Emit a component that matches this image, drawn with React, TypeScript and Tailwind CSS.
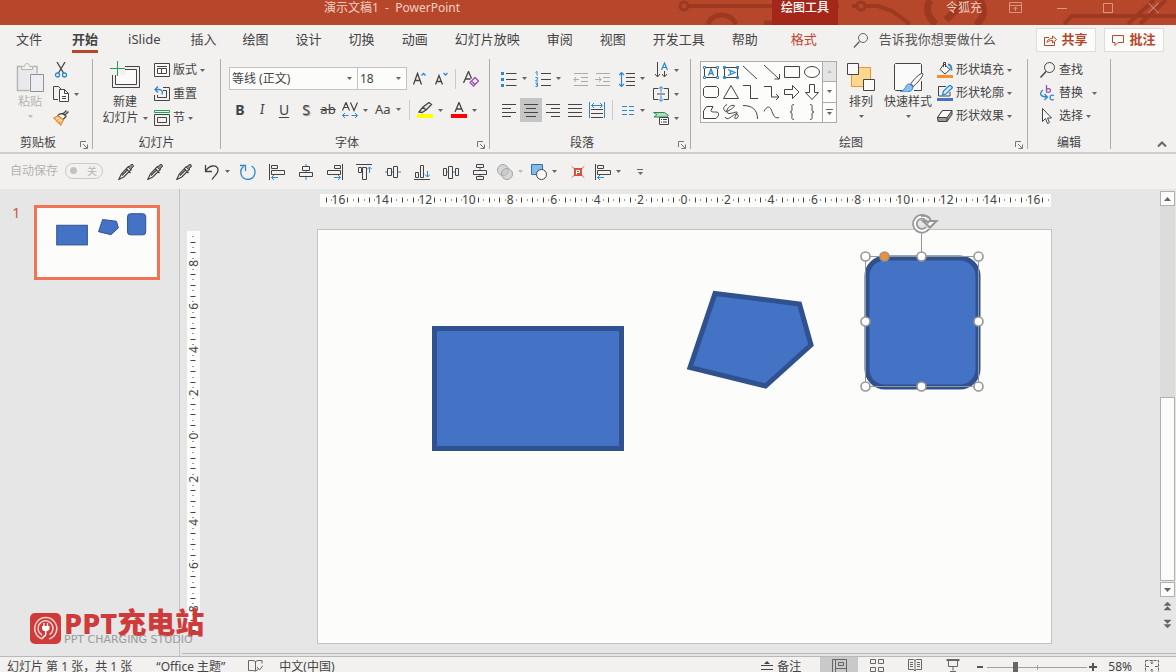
import React from 'react';

type IconProps = {
  w?: number;
  h?: number;
  children: React.ReactNode;
};

const Icon: React.FC<IconProps> = ({ w = 16, h = 16, children }) => (
  <svg
    width={w}
    height={h}
    viewBox={`0 0 ${w} ${h}`}
    fill="none"
    stroke="#444444"
    className="shrink-0"
    aria-hidden="true"
  >
    {children}
  </svg>
);

const Caret: React.FC<{ dim?: boolean }> = ({ dim }) => (
  <svg width="5" height="3" viewBox="0 0 5 3" className="shrink-0" aria-hidden="true">
    <path d="M0 0h5L2.500 3z" fill={dim ? '#bdbdbd' : '#666666'} />
  </svg>
);

const BLUE = '#2b88d0';

/* ---------- icons ---------- */

const PasteIcon = () => (
  <Icon w={28} h={32}>
    <path d="M3 6h16v6h-6v15H3z" fill="#e9e9ec" stroke="none" />
    <path d="M6.500 4.500h-5v24h12M17 4.500h4v7" stroke="#b5b5b5" strokeWidth="1.500" />
    <path d="M5.500 7.500v-3h3c0-4 5-4 5 0h3v3z" stroke="#b5b5b5" fill="#f1f1f1" />
    <path d="M14.500 12.500h13v17h-13z" stroke="#929292" fill="#ededf4" />
  </Icon>
);

const CutIcon = () => (
  <Icon>
    <path d="M4 0l6.500 11M12 0L5.500 11" strokeWidth="1.300" />
    <circle cx="4.500" cy="13" r="2" stroke={BLUE} strokeWidth="1.300" />
    <circle cx="11.500" cy="13" r="2" stroke={BLUE} strokeWidth="1.300" />
  </Icon>
);

const CopyIcon = () => (
  <Icon>
    <path d="M5 13.500H.5V.5h5l3 3" />
    <path d="M6.500 3.500h5l4 4v8h-9zM11.500 3.500v4h4M9 10.500h4M9 12.500h4" fill="#fafafa" />
  </Icon>
);

const PainterIcon = () => (
  <Icon>
    <path d="M15.500 1.500l-4 4M13.500.5l-4 4M10 3.500l3 3-3.500 3.500L5 5.500l1.500-1.500z" fill="#fafafa" strokeWidth="1.300" />
    <path d="M5 6L.8 8l7 7 2.500-5z" fill="#fbd9a8" stroke="#ee8a2c" strokeWidth="1.300" />
    <path d="M3.500 10.500l2-1M6 13l1.500-2" stroke="#ee8a2c" />
  </Icon>
);

const NewSlideIcon = () => (
  <Icon w={30} h={28}>
    <path d="M16 9h10v14H6V14h10z" fill="#fafafa" stroke="none" />
    <path d="M15 5.500h14.500v21h-27V14M15 8.500h11.500v15h-21V14" />
    <path d="M7.500 0v15M0 7.500h15" stroke="#21a05a" />
  </Icon>
);

const LayoutIcon = () => (
  <Icon>
    <path d="M.5 1.500h15v13H.5z" fill="#fafafa" />
    <path d="M3 4.500h10M3.500 6.500h4v5h-4zM7.500 6.500h5v5h-5z" />
  </Icon>
);

const ResetIcon = () => (
  <Icon>
    <path d="M9 1.500h6.500v13H.5V9" />
    <path d="M9 4.500h3.500v7h-9V9" />
    <path d="M1 3.500h4c3 0 4 2 3 5M4 .5l-3 3 3 3" stroke={BLUE} strokeWidth="1.300" />
  </Icon>
);

const SectionIcon = () => (
  <Icon>
    <path d="M.5.5h15v2H.5z" stroke="#21a05a" />
    <path d="M.5 4.500h15v11H.5zM3.500 7.500h9v5h-9z" />
  </Icon>
);

const ClearFormatIcon = () => (
  <Icon>
    <path d="M.5 12L5.500.5l3 7M2.500 8h5" strokeWidth="1.300" />
    <path
      d="M12 6.500l3.500 3.500-5 5L7 11.500zM8.500 10l3.500 3.500"
      stroke="#9a4fa8"
      strokeWidth="1.300"
      fill="#f4e6f6"
    />
  </Icon>
);

const GrowFont: React.FC<{ shrink?: boolean }> = ({ shrink }) => (
  <Icon w={14}>
    <path
      d={shrink ? 'M.5 13.500l3.500-9 3.500 9M2 10.500h4' : 'M.5 13.500l4-11 4 11M2 9.500h5'}
      strokeWidth="1.300"
    />
    <path d={shrink ? 'M8.500 2l2 2 2-2' : 'M8.500 4.500l2-2 2 2'} stroke={BLUE} strokeWidth="1.300" />
  </Icon>
);

const SpacingIcon = () => (
  <Icon>
    <path d="M.5 8.500l3.500-8 3.500 8M2 5.500h4M8.500.5l3.500 8 3.500-8" strokeWidth="1.200" />
    <path d="M.5 13.500h6M9.500 13.500h6M3 11L.5 13.500 3 16M13 11l2.500 2.500L13 16" stroke={BLUE} />
  </Icon>
);

const HighlightIcon = () => (
  <Icon>
    <path d="M2 10l4-5 6-4.500 2.500 2L9 8l-4 2.500zM6 5l3 3" fill="#e8e8e8" strokeWidth="1.300" />
    <path d="M0 12h16v4H0z" fill="#ffff00" stroke="none" />
  </Icon>
);

const FontColorIcon = () => (
  <Icon>
    <path d="M4 10L8 .5l4 9.500M5.500 7h5" strokeWidth="1.300" />
    <path d="M0 12h16v4H0z" fill="#ff0000" stroke="none" />
  </Icon>
);

const BulletsIcon = () => (
  <Icon>
    <path d="M5 2.500h10.500M5 8.500h10.500M5 14.500h10.500" />
    <path d="M0 1h3v3H0zM0 7h3v3H0zM0 13h3v3H0z" fill={BLUE} stroke="none" />
  </Icon>
);

const NumberingIcon = () => (
  <Icon>
    <path d="M6 2.500h10M6 8.500h10M6 14.500h10" />
    <path
      d="M.5 1.500L2 .5v4M.5 6.500h2v1.500L.5 10h2.500M.5 12h2v3.500h-2M1 13.500h1.500"
      stroke={BLUE}
    />
  </Icon>
);

const IndentIcon: React.FC<{ out?: boolean }> = ({ out }) => (
  <Icon>
    <path d="M1 2.500h14M8 6.500h7M8 10.500h7M1 14.500h14" stroke="#aaaaaa" />
    <path d={out ? 'M1 8.500h5M3 6L1 8.500 3 11' : 'M0 8.500h6M4 6l2 2.500L4 11'} stroke="#aaaaaa" />
  </Icon>
);

const LineSpacingIcon = () => (
  <Icon>
    <path d="M7 2.500h9M7 6.500h9M7 10.500h9M7 14.500h9" />
    <path
      d="M2.500 1.500v14M0 4l2.500-2.500L5 4M0 13l2.500 2.500L5 13M2.500 8v1"
      stroke={BLUE}
      strokeWidth="1.200"
    />
  </Icon>
);

const alignPaths = {
  left: 'M1 2.500h14M1 6.500h9M1 10.500h14M1 14.500h9',
  center: 'M1 2.500h14M3 6.500h10M1 10.500h14M3 14.500h10',
  right: 'M1 2.500h14M6 6.500h9M1 10.500h14M6 14.500h9',
  justify: 'M1 2.500h14M1 6.500h14M1 10.500h14M1 14.500h14',
};

const AlignIcon: React.FC<{ kind: keyof typeof alignPaths }> = ({ kind }) => (
  <Icon>
    <path d={alignPaths[kind]} />
  </Icon>
);

const DistributeTextIcon = () => (
  <Icon>
    <path d="M2 7.500h12M2 11.500h12M2 15.500h12" />
    <path d="M.5 0v16M15.500 0v16M3 3.500h10M5 1L2.500 3.500 5 6M11 1l2.500 2.500L11 6" stroke={BLUE} />
  </Icon>
);

const ColumnsIcon = () => (
  <Icon w={14}>
    <path d="M1 4.500h5M1 8.500h5M1 12.500h5M8 4.500h5M8 8.500h5M8 12.500h5" stroke={BLUE} />
  </Icon>
);

const TextDirectionIcon = () => (
  <Icon>
    <path d="M4.500 0v14M2 12l2.500 3L7 12M11.500 9v5M9 12l2.500 3 2.500-3" />
    <path d="M8.500 8l3-7 3 7M9.500 5.500h4" stroke={BLUE} strokeWidth="1.200" />
  </Icon>
);

const AlignTextIcon = () => (
  <Icon>
    <path d="M5 2.500H.5v11H5M11 2.500h4.500v11H11M4 8h8" />
    <path d="M8 1v5.500M8 9.500V15M5.500 3L8 .5 10.500 3M5.500 13L8 15.500l2.500-2.500" stroke={BLUE} />
  </Icon>
);

const SmartArtIcon = () => (
  <Icon>
    <path d="M.5 2.500h11l4 3-2 1.500H1l3-2.500z" fill="#b5d9c4" stroke="#21914f" />
    <path d="M6.500 7.500h9v7h-9zM8 9.500h1M10 9.500h4M8 12h1M10 12h4" fill="#fafafa" />
  </Icon>
);

const ArrangeIcon = () => (
  <Icon w={28} h={30}>
    <path d="M4.500 5.500h19v19h-19z" fill="#fcd88f" stroke="#f09230" />
    <path d="M.5 1.500h11v11H.5zM16.500 17.500h11v11h-11z" fill="#fafafa" />
  </Icon>
);

const QuickStyleIcon = () => (
  <Icon w={32} h={30}>
    <path d="M3 2h26v26H3z" fill="#fafafa" stroke="none" />
    <path d="M12 28.500H3.500L2.500 27.500V2.500l1-1h25l1 1V12M29.500 19v9.500H22" />
    <path d="M30.500 11.500c2 1-5 10-9.500 13l-2-3C22 17 28 11 30.500 11.500z" fill="#fafafa" />
    <path d="M18 22c-4-.5-4 3-5.500 5-1 1.200-3 2-4 2.500C14 31 21 30 21 25z" fill="#8cc0ea" stroke={BLUE} />
  </Icon>
);

const FillIcon = () => (
  <Icon>
    <path d="M7 2l6 5.500-5 4.500-5-4.500zM6.500 5V.5h2V5" fill="#fafafa" />
    <path d="M11 2.500c3 0 3.500 3 3.500 6" stroke={BLUE} strokeWidth="2" />
    <path d="M0 13h16v3H0z" fill="#f28f2e" stroke="none" />
  </Icon>
);

const OutlineIcon = () => (
  <Icon>
    <path d="M9 1.500H1.500v9.500H13V7" />
    <path d="M5.500 10l1-4 6.500-6 2.500 2.500L9 9z" fill="#d5e9f8" stroke={BLUE} strokeWidth="1.300" />
    <path d="M0 13h16v3H0z" fill="#4472c4" stroke="none" />
  </Icon>
);

const EffectsIcon = () => (
  <Icon>
    <path d="M5.500 2.500h9.500v4l-5 7H1L.5 9.500z" fill="#9a9a9a" />
    <path d="M5.500 2.500h9.500l-5 7H.5z" fill="#fafafa" />
    <path d="M10 9.500v4" />
  </Icon>
);

const FindIcon = () => (
  <Icon>
    <circle cx="9.500" cy="5.500" r="5" />
    <path d="M6 9.500L.5 15.500" strokeWidth="1.500" />
  </Icon>
);

const ReplaceIcon = () => (
  <Icon>
    <path d="M6.500 0v7.500M6.500 4.500c1-1.500 4-1 4 1s-3 2.500-4 1" stroke="#9a4fa8" strokeWidth="1.300" />
    <path
      d="M14 10.500c-2-1-4 0-4 2s2 3 4 2M3 5C-1 8 0 12 7 12M4.500 9L7.500 12l-3 3"
      stroke={BLUE}
      strokeWidth="1.300"
    />
  </Icon>
);

const SelectIcon = () => (
  <Icon>
    <path d="M2.500.5v13l3-3 2 5 2-1-2-4.500h4z" fill="#fafafa" />
  </Icon>
);

const PickerIcon = () => (
  <Icon>
    <path
      d="M.8 15.500l2.500-5.500 7-7.500 3 3-7.500 7.500zM8 4.500l4.500 4.500M4 11.500l6-6"
      strokeWidth="1.200"
    />
    <path d="M10.500 3.500l2.500-3c1.500-.8 3 .8 2.300 2.300l-3 2.700z" fill="#8a8a8a" />
  </Icon>
);

const UndoIcon = () => (
  <Icon>
    <path d="M1.500 1v6.500H8M1.500 7.500C5 .5 13 .5 14 5.500c.5 4-4 6.500-6 10" strokeWidth="1.300" />
  </Icon>
);

const RedoIcon = () => (
  <Icon>
    <path
      d="M3.500 2.500C-1 6 0 15 8 15.500 16 15 17 5 11.500 2M0 1.500h5.500V7"
      stroke={BLUE}
      strokeWidth="1.300"
    />
  </Icon>
);

const AlignLeftShapes = () => (
  <Icon>
    <path d="M.5 0v16M2.500 1.500h6v3h-6zM2.500 6.500h13v4h-13z" />
    <path d="M2.500 13.500H9M5 11l-2.500 2.500L5 16" stroke={BLUE} />
  </Icon>
);

const AlignRightShapes = () => (
  <Icon>
    <path d="M15.500 0v16M7.500 1.500h6v3h-6zM.5 6.500h13v4H.5z" />
    <path d="M7 13.500h6.500M11 11l2.500 2.500L11 16" stroke={BLUE} />
  </Icon>
);

const AlignCenterShapes = () => (
  <Icon>
    <path d="M8 0v16" stroke={BLUE} />
    <path d="M4.500 2.500h7v4h-7zM1.500 8.500h13v4h-13z" fill="#f1f1f1" />
  </Icon>
);

const AlignTopShapes = () => (
  <Icon>
    <path d="M0 .5h16M2.500 3.500h3v5h-3zM6.500 3.500h4v12h-4z" />
    <path d="M13.500 3v6M11 5.500L13.500 3 16 5.500" stroke={BLUE} />
  </Icon>
);

const AlignMiddleShapes = () => (
  <Icon>
    <path d="M0 8h16" stroke={BLUE} />
    <path d="M2.500 4.500h4v7h-4zM8.500 2.500h4v11h-4z" fill="#f1f1f1" />
  </Icon>
);

const AlignBottomShapes = () => (
  <Icon>
    <path d="M0 15.500h16M1.500 8.500h3v5h-3zM6.500 1.500h3v12h-3z" />
    <path d="M13.500 7v6M11 10.500l2.500 2.500 2.500-2.500" stroke={BLUE} />
  </Icon>
);

const DistributeH = () => (
  <Icon>
    <path d="M0 8h16" stroke={BLUE} />
    <path d="M.5 4.500h3v7h-3zM5.500 2.500h4v12h-4zM12.500 4.500h3v7h-3z" fill="#f1f1f1" />
  </Icon>
);

const DistributeV = () => (
  <Icon>
    <path d="M8 0v16" stroke={BLUE} />
    <path d="M4.500.5h7v3h-7zM1.500 6.500h13v4h-13zM4.500 12.500h7v3h-7z" fill="#f1f1f1" />
  </Icon>
);

const MergeIcon = () => (
  <Icon>
    <circle cx="6" cy="6" r="5.500" fill="#d6d6d6" stroke="#a5a5a5" />
    <circle cx="10" cy="10" r="5.500" fill="#c4c4c499" stroke="#a5a5a5" />
  </Icon>
);

const ShapesIcon = () => (
  <Icon>
    <path d="M.5.5h11v10H.5z" fill="#85bbe8" stroke="#2f6fb5" />
    <circle cx="10.500" cy="10.500" r="5" fill="#fafafa" />
  </Icon>
);

const PluginIcon = () => (
  <Icon>
    <path d="M2 2.500l3 3M14 2.500l-3 3M2 13.500l3-3M14 13.500l-3-3" stroke="#d0553f" />
    <path d="M4 4h8v8H4z" fill="#d0553f" stroke="none" />
    <path d="M6.500 10.500v-4h3v2h-3" stroke="#ffffff" />
  </Icon>
);

const Launcher = () => (
  <button aria-label="更多选项" className="flex w-4 items-end justify-center">
    <Icon w={8} h={8}>
      <path d="M.5 6V.5H6M3 3l4 4M7.500 3.500v4h-4" stroke="#777777" />
    </Icon>
  </button>
);

/* ---------- shared pieces ---------- */

type GroupProps = {
  label: string;
  width: string;
  launcher?: boolean;
  children: React.ReactNode;
};

const Group: React.FC<GroupProps> = ({ label, width, launcher, children }) => (
  <section
    aria-label={label}
    className={`flex h-[90px] shrink-0 flex-col border-r border-[#acacac] ${width}`}
  >
    <div className="flex min-h-0 flex-1 items-start">{children}</div>
    <div className="flex h-[14px]">
      <span className="flex-1 text-center leading-4">{label}</span>
      {launcher && <Launcher />}
    </div>
  </section>
);

type ToolProps = {
  label: string;
  className?: string;
  caret?: boolean;
  dim?: boolean;
  children: React.ReactNode;
};

// Icon-only button, optionally with a drop-down caret
const Tool: React.FC<ToolProps> = ({ label, className = '', caret, dim, children }) => (
  <button
    aria-label={label}
    title={label}
    className={`flex shrink-0 items-center gap-[5px] ${className}`}
  >
    {children}
    {caret && <Caret dim={dim} />}
  </button>
);

type RowProps = { icon: React.ReactNode; text: string; caret?: boolean; wide?: boolean };

const ToolRow: React.FC<RowProps> = ({ icon, text, caret, wide }) => (
  <button className="flex h-4 items-center gap-[3px] whitespace-nowrap leading-4">
    {icon}
    <span>{text}</span>
    {caret && (
      <span className={wide ? 'ml-1.5' : ''}>
        <Caret />
      </span>
    )}
  </button>
);

/* ---------- title bar ---------- */

const windowButtons = [
  { label: '功能区显示选项', d: 'M.5 1.500h12v10H.5zM.5 4.500h12M6.500 10V6M4.500 8l2-2 2 2' },
  { label: '最小化', d: 'M2 7.500h10' },
  { label: '最大化', d: 'M2.500 2.500h9v9h-9z' },
  { label: '关闭', d: 'M1.500 2l10 10M11.500 2l-10 10' },
];

const TitleBar = () => (
  <header className="relative flex h-[25px] shrink-0 overflow-hidden bg-[#b7472a] text-[#f3cfc4]">
    <svg
      className="absolute right-0 top-0"
      width="500"
      height="25"
      viewBox="0 0 500 25"
      fill="none"
      stroke="#9c3920"
      strokeWidth="4"
      aria-hidden="true"
    >
      <circle cx="8" cy="6" r="4" strokeWidth="3" />
      <path d="M13 6h150M176 6h26l14 5 18 13" />
      <circle cx="185" cy="6" r="4" fill="#b7472a" strokeWidth="3" />
      <path d="M32 24c5-12 22-12 28 0M88 23h10" strokeWidth="5" />
      <path d="M254 0c-5 9-2 18 6 24M304 0c6 9 4 18-4 25M270 20l18-18M281 2h9v9" strokeWidth="7" />
      <path d="M388 24l8-8h104M452 24l26-24M464 24l26-24" />
    </svg>
    <div className="relative w-[772px] shrink-0 whitespace-pre pl-3 text-center text-xs leading-4">
      演示文稿1  -  PowerPoint
    </div>
    <div className="relative w-[66px] shrink-0 bg-[#a4281a] text-center text-xs leading-4 font-medium text-white">
      绘图工具
    </div>
    <div className="relative flex flex-1 justify-end">
      <span className="mr-2.5 text-xs leading-4">令狐充</span>
      {windowButtons.map(({ label, d }) => (
        <button key={label} aria-label={label} className="flex h-[14px] w-[46px] items-center justify-center">
          <svg width="13" height="13" viewBox="0 0 13 13" fill="none" stroke="#dc9583" aria-hidden="true">
            <path d={d} />
          </svg>
        </button>
      ))}
    </div>
  </header>
);

/* ---------- tabs ---------- */

const leadTabs = ['文件', '开始', 'iSlide', '插入'];
const mainTabs = ['绘图', '设计', '切换', '动画', '幻灯片放映', '审阅', '视图', '开发工具', '帮助'];

const Tab: React.FC<{ name: string; active?: boolean; accent?: boolean }> = ({
  name,
  active,
  accent,
}) => (
  <button
    aria-current={active ? 'page' : undefined}
    className={`h-7 shrink-0 whitespace-nowrap border-b-3 pt-[5px] ${
      active ? 'border-[#b7472a] font-bold' : 'border-transparent'
    } ${accent ? 'text-[#c0452b]' : ''}`}
  >
    {name}
  </button>
);

const TabBar = () => (
  <nav className="flex h-[34px] shrink-0 pl-4 pr-3 text-[13px]">
    <div className="flex gap-[30px]">
      {leadTabs.map((name) => (
        <Tab key={name} name={name} active={name === '开始'} />
      ))}
    </div>
    <div className="ml-[26px] flex gap-[27px]">
      {mainTabs.map((name) => (
        <Tab key={name} name={name} />
      ))}
    </div>
    <div className="ml-[33px] flex">
      <Tab name="格式" accent />
    </div>
    <label className="ml-9 flex h-7 min-w-0 flex-1 items-center gap-[10px] pt-px">
      <Icon>
        <circle cx="10" cy="6" r="4.500" stroke="#666666" />
        <path d="M6.500 9.500l-5.500 6" stroke="#666666" strokeWidth="1.500" />
      </Icon>
      <input
        type="text"
        aria-label="操作说明搜索"
        placeholder="告诉我你想要做什么"
        className="min-w-0 flex-1 bg-transparent placeholder:text-[#555555] placeholder:opacity-100 focus:outline-none"
      />
    </label>
    <div className="mt-[3px] flex gap-2 font-bold text-[#b7472a]">
      <button className="flex h-6 w-[60px] items-center justify-center gap-1 border border-[#dddddd] bg-[#fcfcfb]">
        <Icon w={13} h={13}>
          <path
            d="M5 3.500H.5v8h10V8M3 8.500c0-3 3-4 5.500-4V2l4 3.500-4 3.500V6.500C6 6.500 4 7 3 8.500z"
            stroke="#b7472a"
          />
        </Icon>
        共享
      </button>
      <button className="flex h-6 w-[60px] items-center justify-center gap-1 border border-[#dddddd] bg-[#fcfcfb]">
        <Icon w={13} h={13}>
          <path d="M.5 1.500h11v7H6l-3 3v-3H.5z" stroke="#b7472a" />
        </Icon>
        批注
      </button>
    </div>
  </nav>
);

/* ---------- ribbon groups ---------- */

const ClipboardGroup = () => (
  <Group label="剪贴板" width="w-[93px]" launcher>
    <button className="ml-[12px] flex w-9 flex-col items-center pt-[3px] text-[#b5b5b5]">
      <PasteIcon />
      <span className="leading-4">粘贴</span>
      <span className="mt-[5px] flex">
        <Caret dim />
      </span>
    </button>
    <div className="ml-[5px] flex flex-col gap-2 pt-[3px]">
      <Tool label="剪切">
        <CutIcon />
      </Tool>
      <Tool label="复制" caret>
        <CopyIcon />
      </Tool>
      <Tool label="格式刷">
        <PainterIcon />
      </Tool>
    </div>
  </Group>
);

const SlidesGroup = () => (
  <Group label="幻灯片" width="w-[128px]">
    <button className="ml-[9px] flex w-[46px] flex-col items-center pt-[2px] leading-4">
      <NewSlideIcon />
      <span className="mt-[5px]">新建</span>
      <span className="flex items-center gap-[4px] whitespace-nowrap">
        幻灯片
        <Caret />
      </span>
    </button>
    <div className="ml-[6px] flex flex-col gap-2 pt-[3px]">
      <ToolRow icon={<LayoutIcon />} text="版式" caret />
      <ToolRow icon={<ResetIcon />} text="重置" />
      <ToolRow icon={<SectionIcon />} text="节" caret />
    </div>
  </Group>
);

const Divider: React.FC<{ className?: string }> = ({ className = '' }) => (
  <span className={`h-5 w-px shrink-0 bg-[#cccccc] ${className}`} />
);

const FontSelect: React.FC<{ label: string; value: string; width: string }> = ({
  label,
  value,
  width,
}) => (
  <label className={`grid h-[23px] items-center border border-[#c3c3c3] bg-[#fcfcfb] ${width}`}>
    <select
      aria-label={label}
      defaultValue={value}
      className="col-start-1 row-start-1 w-full appearance-none bg-transparent pl-0.5 pr-3 focus:outline-none"
    >
      <option>{value}</option>
    </select>
    <span className="pointer-events-none col-start-1 row-start-1 flex justify-self-end pr-[5px]">
      <Caret />
    </span>
  </label>
);

const letterTool = 'w-[22px] justify-center text-[14px]';

const FontGroup = () => (
  <Group label="字体" width="w-[269px]" launcher>
    <div className="flex flex-1 flex-col pl-2 pt-2">
      <div className="flex h-[23px] items-center">
        <FontSelect label="字体" value="等线 (正文)" width="w-[129px]" />
        <FontSelect label="字号" value="18" width="w-[49px] border-l-0" />
        <Tool label="增大字号" className="ml-[6px]">
          <GrowFont />
        </Tool>
        <Tool label="减小字号" className="ml-[8px]">
          <GrowFont shrink />
        </Tool>
        <Divider className="ml-[6px]" />
        <Tool label="清除所有格式" className="ml-[7px]">
          <ClearFormatIcon />
        </Tool>
      </div>
      <div className="mt-2 flex h-6 items-center">
        <Tool label="加粗" className={`${letterTool} font-bold`}>
          B
        </Tool>
        <Tool label="倾斜" className={`${letterTool} font-serif italic`}>
          I
        </Tool>
        <Tool label="下划线" className={`${letterTool} underline underline-offset-2`}>
          U
        </Tool>
        <Tool label="文字阴影" className={`${letterTool} text-shadow-[1px_1px_1px_#888888]`}>
          S
        </Tool>
        <Tool label="删除线" className="w-[22px] justify-center text-[13px] line-through">
          ab
        </Tool>
        <Tool label="字符间距" className="ml-[3px]" caret>
          <SpacingIcon />
        </Tool>
        <Tool label="更改大小写" className="ml-[7px] text-[13px]" caret>
          Aa
        </Tool>
        <Divider className="ml-[8px]" />
        <Tool label="文本突出显示颜色" className="ml-[7px]" caret>
          <HighlightIcon />
        </Tool>
        <Tool label="字体颜色" className="ml-[8px]" caret>
          <FontColorIcon />
        </Tool>
      </div>
    </div>
  </Group>
);

const ParagraphGroup = () => (
  <Group label="段落" width="w-[201px]" launcher>
    <div className="flex w-[163px] flex-col pl-2 pt-2">
      <div className="flex h-[23px] items-center pl-[3px]">
        <Tool label="项目符号" caret>
          <BulletsIcon />
        </Tool>
        <Tool label="编号" className="ml-[8px]" caret>
          <NumberingIcon />
        </Tool>
        <Tool label="降低列表级别" className="ml-3">
          <IndentIcon out />
        </Tool>
        <Tool label="提高列表级别" className="ml-[6px]">
          <IndentIcon />
        </Tool>
        <Tool label="行距" className="ml-[8px]" caret>
          <LineSpacingIcon />
        </Tool>
      </div>
      <div className="mt-2 flex h-6 items-center">
        <Tool label="左对齐" className="h-6 w-[22px] justify-center">
          <AlignIcon kind="left" />
        </Tool>
        <Tool label="居中" className="h-6 w-[22px] justify-center bg-[#c5c5c5]">
          <AlignIcon kind="center" />
        </Tool>
        <Tool label="右对齐" className="h-6 w-[22px] justify-center">
          <AlignIcon kind="right" />
        </Tool>
        <Tool label="两端对齐" className="h-6 w-[22px] justify-center">
          <AlignIcon kind="justify" />
        </Tool>
        <Tool label="分散对齐" className="h-6 w-[22px] justify-center">
          <DistributeTextIcon />
        </Tool>
        <Divider className="ml-1" />
        <Tool label="分栏" className="ml-2" caret>
          <ColumnsIcon />
        </Tool>
      </div>
    </div>
    <div className="flex flex-col gap-2 pt-[3px]">
      <Tool label="文字方向" caret>
        <TextDirectionIcon />
      </Tool>
      <Tool label="对齐文本" caret>
        <AlignTextIcon />
      </Tool>
      <Tool label="转换为 SmartArt" caret>
        <SmartArtIcon />
      </Tool>
    </div>
  </Group>
);

const galleryShapes = [
  { name: '直线', d: 'M2 4l14 13' },
  { name: '箭头', d: 'M2 3l15 14M12.500 17h5v-5' },
  { name: '矩形', d: 'M2.500 4.500h15v11h-15z' },
  { name: '椭圆', d: 'M2.500 10a7.500 5.500 0 1 0 15 0a7.500 5.500 0 1 0-15 0z' },
  { name: '圆角矩形', d: 'M4.500 4.500h11l2 2v7l-2 2h-11l-2-2v-7z' },
  { name: '等腰三角形', d: 'M10 3.500l7.500 13h-15z' },
  { name: '肘形连接符', d: 'M2 3.500h7.500v13H17' },
  { name: '肘形箭头连接符', d: 'M2 4.500h7.500v10.500H17M14 12l3 3-3 3' },
  { name: '右箭头', d: 'M2.500 7.500h8v-4l6.500 6.500-6.500 6.500v-4h-8z' },
  { name: '下箭头', d: 'M7.500 2.500h5v8h4L10 17.500 3.500 10.500h4z' },
  { name: '任意多边形', d: 'M5.500 4.500h6.500l-2 4c0 3 7 0 7.500 3v2l-2.500 3H2.500V9z' },
  {
    name: '自由曲线',
    d: 'M6 2.500c-6 3-3 9 2 6s8-6 3-5-7 8-3 8 9-3 8-.5-4 6-1 5.500 3-5 0-4.500-9 8-11 3',
  },
  { name: '弧形', d: 'M2 3.500c9 0 14.500 4 14.500 13.500' },
  { name: '曲线', d: 'M2 9.500c3-6 6-6 8 0s4 7 7 6' },
  { name: '左大括号', d: 'M12 2.500c-3 0-2 2-2 4.500 0 2-.5 3-2 3 1.500 0 2 1 2 3 0 2.500-1 4.500 2 4.500' },
  { name: '右大括号', d: 'M8 2.500c3 0 2 2 2 4.500 0 2 .5 3 2 3-1.500 0-2 1-2 3 0 2.500 1 4.500-2 4.500' },
];

const TextBoxShape: React.FC<{ vertical?: boolean }> = ({ vertical }) => (
  <Icon w={20} h={20}>
    <path d="M3.500 5.500h13v10h-13z" />
    <path
      d={vertical ? 'M7 7.500l7 3-7 3M9.500 8.500v4' : 'M7.500 13.500l2.500-6.500 2.500 6.500M8.500 11.500h3'}
      stroke={BLUE}
      strokeWidth="1.300"
    />
    <path
      d="M2.500 4.500h2v2h-2zM15.500 4.500h2v2h-2zM2.500 14.500h2v2h-2zM15.500 14.500h2v2h-2z"
      stroke={BLUE}
      fill={vertical ? BLUE : '#fafafa'}
    />
  </Icon>
);

const ShapeGallery = () => (
  <div className="ml-[9px] mt-[2px] flex h-[62px] w-[137px] shrink-0 border border-[#ababab] bg-[#fcfcfb]">
    <div className="grid flex-1 grid-cols-6 grid-rows-3">
      <button aria-label="文本框" className="flex items-center justify-center">
        <TextBoxShape />
      </button>
      <button aria-label="竖排文本框" className="flex items-center justify-center">
        <TextBoxShape vertical />
      </button>
      {galleryShapes.map(({ name, d }) => (
        <button key={name} aria-label={name} className="flex items-center justify-center">
          <Icon w={20} h={20}>
            <path d={d} />
          </Icon>
        </button>
      ))}
    </div>
    <div className="flex w-[14px] flex-col divide-y divide-[#ababab] border-l border-[#ababab]">
      <button aria-label="上一行" className="flex flex-1 items-center justify-center bg-[#e4e4e4]">
        <Icon w={5} h={3}>
          <path d="M0 3h5L2.500 0z" fill="#bdbdbd" stroke="none" />
        </Icon>
      </button>
      <button aria-label="下一行" className="flex flex-1 items-center justify-center">
        <Caret />
      </button>
      <button aria-label="其他形状" className="flex flex-1 flex-col items-center justify-center gap-0.5">
        <span className="h-px w-[7px] bg-[#666666]" />
        <Caret />
      </button>
    </div>
  </div>
);

const DrawingGroup = () => (
  <Group label="绘图" width="w-[337px]" launcher>
    <ShapeGallery />
    <button className="ml-1 flex w-10 flex-col items-center pt-[3px]">
      <ArrangeIcon />
      <span className="mt-0.5 leading-4">排列</span>
      <span className="mt-[5px] flex">
        <Caret />
      </span>
    </button>
    <button className="ml-px flex w-[52px] flex-col items-center pt-[3px]">
      <QuickStyleIcon />
      <span className="mt-0.5 whitespace-nowrap leading-4">快速样式</span>
      <span className="mt-[5px] flex">
        <Caret />
      </span>
    </button>
    <div className="ml-[3px] flex flex-col gap-[7px] pt-[3px]">
      <ToolRow icon={<FillIcon />} text="形状填充" caret />
      <ToolRow icon={<OutlineIcon />} text="形状轮廓" caret />
      <ToolRow icon={<EffectsIcon />} text="形状效果" caret />
    </div>
  </Group>
);

const EditingGroup = () => (
  <Group label="编辑" width="w-[83px]">
    <div className="ml-3 flex flex-col gap-[7px] pt-[3px]">
      <ToolRow icon={<FindIcon />} text="查找" />
      <ToolRow icon={<ReplaceIcon />} text="替换" caret wide />
      <ToolRow icon={<SelectIcon />} text="选择" caret />
    </div>
  </Group>
);

const Ribbon = () => (
  <div className="flex shrink-0 border-b-2 border-[#d0cfce] pb-[3px]">
    <ClipboardGroup />
    <SlidesGroup />
    <FontGroup />
    <ParagraphGroup />
    <DrawingGroup />
    <EditingGroup />
    <button aria-label="折叠功能区" className="ml-auto flex items-end pb-0.5 pr-[9px]">
      <Icon w={10} h={6}>
        <path d="M1 5.500l4-4 4 4" stroke="#666666" strokeWidth="2" />
      </Icon>
    </button>
  </div>
);

/* ---------- quick access toolbar ---------- */

const alignTools = [
  { label: '左对齐', icon: <AlignLeftShapes /> },
  { label: '水平居中', icon: <AlignCenterShapes /> },
  { label: '右对齐', icon: <AlignRightShapes /> },
  { label: '顶端对齐', icon: <AlignTopShapes /> },
  { label: '垂直居中', icon: <AlignMiddleShapes /> },
  { label: '底端对齐', icon: <AlignBottomShapes /> },
  { label: '横向分布', icon: <DistributeH /> },
  { label: '纵向分布', icon: <DistributeV /> },
];

const QuickAccess = () => (
  <div className="flex h-[35px] shrink-0 items-center pl-[10px]">
    <label className="mb-[2px] flex items-center gap-[7px] text-[#b5b3b1]">
      自动保存
      <button
        role="switch"
        aria-checked="false"
        disabled
        className="flex h-4 w-[38px] items-center justify-between rounded-full border border-[#cbc9c7] pl-1 pr-[5px] text-[10px] leading-none"
      >
        <span className="size-[7px] rounded-full bg-[#c4c2c0]" />
        关
      </button>
    </label>
    <div className="ml-2 flex items-center">
      {['取色器 1', '取色器 2', '取色器 3'].map((label) => (
        <Tool key={label} label={label} className="w-[29px] justify-center">
          <PickerIcon />
        </Tool>
      ))}
      <Tool label="撤消" className="w-[35px] pl-[6px]" caret>
        <UndoIcon />
      </Tool>
      <Tool label="重复" className="w-[29px] justify-center">
        <RedoIcon />
      </Tool>
      {alignTools.map(({ label, icon }) => (
        <Tool key={label} label={label} className="w-[29px] justify-center">
          {icon}
        </Tool>
      ))}
      <Tool label="合并形状" className="ml-[3px] w-[34px]" caret dim>
        <MergeIcon />
      </Tool>
      <Tool label="形状" className="w-[32px]" caret>
        <ShapesIcon />
      </Tool>
      <Tool label="插件" className="w-[29px] justify-center">
        <PluginIcon />
      </Tool>
      <Tool label="对齐" className="ml-[3px] w-[36px]" caret>
        <AlignLeftShapes />
      </Tool>
      <button aria-label="自定义快速访问工具栏" className="ml-[6px] flex flex-col items-center gap-0.5">
        <span className="h-px w-[6px] bg-[#666666]" />
        <Caret />
      </button>
    </div>
  </div>
);

/* ---------- slide content ---------- */

const SlideShapes: React.FC<{ stroke: number }> = ({ stroke }) => (
  <g fill="#4472c4" stroke="#2f528f" strokeWidth={stroke}>
    <rect x="116.500" y="98.500" width="187" height="120" />
    <path d="M397 63.500L481.500 74 493 115 447.500 156 372 137.500z" strokeLinejoin="miter" />
    <rect x="549" y="28" width="111" height="129" rx="18" />
  </g>
);

const handles = [
  [547.5, 26.5],
  [603.5, 26.5],
  [660.5, 26.5],
  [547.5, 91.5],
  [660.5, 91.5],
  [547.5, 156.5],
  [603.5, 156.5],
  [660.5, 156.5],
];

const Selection = () => (
  <g stroke="#969696" fill="none">
    <path d="M547.500 26.500h113v130h-113zM603.500 26.500V3" />
    {handles.map(([x, y]) => (
      <circle key={`${x}-${y}`} cx={x} cy={y} r="4.500" fill="#ffffff" strokeWidth="1.600" />
    ))}
    <circle cx="566.500" cy="26.500" r="4.500" fill="#f28f2e" strokeWidth="1.600" />
    <path d="M608.500 -11.500a7 7 0 1 0 1 9.500" strokeWidth="5.500" />
    <path d="M608.500 -11.500a7 7 0 1 0 1 9.500" stroke="#ffffff" strokeWidth="2" />
    <path d="M603 -14c6-1 9 1 10 5" strokeWidth="2" />
    <path d="M605 -9h3.500l1.500 1.500 1.500-1.500h7l-6.500 6.500z" fill="#ffffff" strokeWidth="2" />
  </g>
);

const Ruler: React.FC<{ vertical?: boolean }> = ({ vertical }) => {
  const length = vertical ? 402 : 731;
  const zero = vertical ? 205 : 364;
  const max = vertical ? 37 : 68;
  const limit = vertical ? 8 : 16;
  const step = vertical ? 5.4 : 5.43;
  const marks = [];

  for (let i = -max; i <= max; i++) {
    const pos = zero + i * step;
    const value = Math.abs(i / 4);
    const isLabel = i % 8 === 0 && value <= limit;
    if (pos < 1 || pos > length - 1) continue;

    if (isLabel) {
      marks.push(
        <text
          key={i}
          textAnchor="middle"
          fontSize="12"
          fill="#444444"
          {...(vertical
            ? { transform: `translate(10.500 ${pos}) rotate(-90)` }
            : { x: value >= 10 ? pos + 2 : pos, y: 10 })}
        >
          {value}
        </text>
      );
      continue;
    }
    // two-digit labels cover the tick on their right
    if (!vertical && (i + 80) % 8 === 1 && Math.abs(i) > 36) continue;
    const half = i % 2 === 0 ? 2.5 : 1;
    const at = Math.round(pos) + 0.5;
    marks.push(
      <path
        key={i}
        stroke={i % 2 === 0 ? '#444444' : '#999999'}
        d={vertical ? `M${6 - half} ${at}h${half * 2}` : `M${at} ${6 - half}v${half * 2}`}
      />
    );
  }

  return vertical ? (
    <svg
      width="13"
      height="402"
      viewBox="0 0 13 402"
      className="mt-[42px] shrink-0 overflow-visible bg-[#fcfcfb]"
    >
      {marks}
    </svg>
  ) : (
    <svg viewBox="0 0 731 13" className="ml-[3px] mr-px overflow-visible bg-[#fcfcfb]">
      {marks}
    </svg>
  );
};

const Thumbnails = () => (
  <aside className="flex w-[180px] shrink-0 items-start border-r border-[#c2c2c2] pl-3 pt-4">
    <span className="w-[22px] text-[15px] leading-[14px] text-[#cf5b45]">1</span>
    <button aria-label="幻灯片 1" className="w-[126px] border-3 border-[#f07355] bg-[#fcfcfb]">
      <svg viewBox="-4 -7 733 421" className="block w-full" aria-hidden="true">
        <SlideShapes stroke={6} />
      </svg>
    </button>
  </aside>
);

const Brand = () => (
  <div className="absolute bottom-3 left-[30px] flex items-center gap-[3px]">
    <svg width="31" height="31" viewBox="0 0 31 31" fill="none" stroke="#ffffff" aria-hidden="true">
      <rect width="31" height="31" rx="5" fill="#cf3a3a" stroke="none" />
      <path
        d="M12.500 26A11 11 0 1 1 19 26M12 22a7.500 7.500 0 1 1 7.500-.3"
        stroke="#f6d5d0"
        strokeWidth="1.500"
      />
      <path d="M14 10v3M17.500 10v3" strokeWidth="1.300" />
      <path d="M12 13h7.500v2.500c0 3.500-7.500 3.500-7.500 0z" fill="#ffffff" stroke="none" />
      <path d="M15.700 17.500v4c0 2-3 1.500-3 4" strokeWidth="1.500" />
    </svg>
    <div className="whitespace-nowrap">
      <div className="flex h-[22px] items-center text-[29px] leading-[20px] font-extrabold text-[#cf3a3a]">
        PPT充电站
      </div>
      <div className="mt-px h-[9px] font-['DejaVu_Sans',sans-serif] text-[11px] leading-[9px] text-[#9a9a9a]">
        PPT CHARGING STUDIO
      </div>
    </div>
  </div>
);

const arrowButton =
  'flex h-[15px] shrink-0 items-center justify-center border border-[#b0b0b0] bg-[#fcfcfb]';

const ScrollBar = () => (
  <div className="flex w-4 flex-col pr-px pt-[2px]">
    <button aria-label="向上滚动" className={arrowButton}>
      <Icon w={7} h={4}>
        <path d="M0 4h7L3.500 0z" fill="#666666" stroke="none" />
      </Icon>
    </button>
    <div className="flex flex-1 flex-col justify-end bg-[#dcdcdb]">
      <div className="h-[49%] border border-[#b0b0b0] bg-[#fcfcfb]" />
    </div>
    <button aria-label="向下滚动" className={`mt-px ${arrowButton}`}>
      <Icon w={7} h={4}>
        <path d="M0 0h7L3.500 4z" fill="#666666" stroke="none" />
      </Icon>
    </button>
    <button aria-label="上一张幻灯片" className="mt-1 flex justify-center">
      <Icon w={7} h={10}>
        <path d="M0 4.500h7L3.500 1zM0 9h7L3.500 5.500z" fill="#666666" stroke="#666666" strokeWidth="0.5" />
      </Icon>
    </button>
    <button aria-label="下一张幻灯片" className="mb-6 mt-2 flex justify-center">
      <Icon w={7} h={10}>
        <path d="M0 1h7L3.500 4.500zM0 5.500h7L3.500 9z" fill="#666666" stroke="#666666" strokeWidth="0.5" />
      </Icon>
    </button>
  </div>
);

const Workspace = () => (
  <main className="relative flex min-h-0 flex-1 bg-[#e6e6e6]">
    <Thumbnails />
    <section className="mb-[2px] ml-[2px] flex min-w-0 flex-1 border-b border-[#b8b8b8] pl-[5px]">
      <Ruler vertical />
      <div className="ml-[117px] mr-[108px] flex min-w-0 flex-1 flex-col pt-[5px]">
        <Ruler />
        <div className="mt-[22px] border border-[#c2c2c2] bg-[#fcfcfb]">
          <svg
            viewBox="0 0 733 413"
            className="block w-full overflow-visible"
            role="img"
            aria-label="幻灯片内容"
          >
            <SlideShapes stroke={5} />
            <Selection />
          </svg>
        </div>
      </div>
      <ScrollBar />
    </section>
    <Brand />
  </main>
);

/* ---------- status bar ---------- */

const viewButton = 'flex h-4 w-[38px] items-center justify-center';

const StatusBar = () => (
  <footer className="flex h-4 shrink-0 items-start whitespace-nowrap border-t border-[#b8b8b8] leading-[19px]">
    <span className="ml-[7px]">幻灯片 第 1 张，共 1 张</span>
    <span className="ml-6">“Office 主题”</span>
    <button aria-label="拼写检查" className="ml-[23px] mt-[2px]">
      <Icon w={15} h={14}>
        <path
          d="M7.500 12V2.500L5 1.500H.5v10h4zL10 10.500M7.500 2.500l2.500-1h4v3M9 8l2.500 3L15 6.500"
          stroke="#666666"
        />
      </Icon>
    </button>
    <span className="ml-4">中文(中国)</span>
    <div className="ml-auto flex items-start">
      <button className="mr-[19px] flex items-start gap-1">
        <Icon w={12} h={14}>
          <path d="M0 8.500h12M0 12.500h12" />
          <path d="M3 7h6L6 4z" fill="#444444" stroke="none" />
        </Icon>
        备注
      </button>
      <button aria-label="普通视图" className={`${viewButton} bg-[#c9c9c9]`}>
        <Icon w={15} h={14}>
          <path d="M.5 1.500h14v13H.5zM3.500 1.500v13M6.500 4.500h5v3h-5zM4 10.500h10" stroke="#666666" />
        </Icon>
      </button>
      <button aria-label="幻灯片浏览" className={viewButton}>
        <Icon w={14} h={14}>
          <path
            d="M.5 1.500h5v4h-5zM8.500 1.500h5v4h-5zM.5 9.500h5v4h-5zM8.500 9.500h5v4h-5z"
            stroke="#666666"
          />
        </Icon>
      </button>
      <button aria-label="阅读视图" className={viewButton}>
        <Icon w={14} h={14}>
          <path
            d="M.5 1.500h5l1.500 1 1.500-1h5v10h-5L7 13l-1.500-1.500h-5zM7 2v11M2 4.500h3M2 6.500h3M2 8.500h3M9 4.500h3M9 6.500h3M9 8.500h3"
            stroke="#666666"
          />
        </Icon>
      </button>
      <button aria-label="幻灯片放映" className={viewButton}>
        <Icon w={14} h={14}>
          <path d="M.5 2h13" stroke="#666666" strokeWidth="2" />
          <path d="M2.500 2v6.500h9V2M7 8.500v4M4 13.500h6" stroke="#666666" />
        </Icon>
      </button>
      <button aria-label="缩小" className="ml-[5px] flex h-[20px] w-2 items-center">
        <span className="h-[2px] w-[6px] bg-[#555555]" />
      </button>
      <input
        type="range"
        aria-label="显示比例"
        min={0}
        max={100}
        defaultValue={27}
        className="mx-[2px] mt-[5px] h-[11px] w-[100px] appearance-none bg-[linear-gradient(#a0a0a0,#a0a0a0),linear-gradient(#a0a0a0,#a0a0a0)] bg-[length:100%_1px,1px_5px] bg-center bg-no-repeat [&::-webkit-slider-thumb]:h-[11px] [&::-webkit-slider-thumb]:w-[5px] [&::-webkit-slider-thumb]:appearance-none [&::-webkit-slider-thumb]:bg-[#666666]"
      />
      <button aria-label="放大" className="flex h-[20px] items-center">
        <Icon w={8} h={8}>
          <path d="M0 4h8M4 0v8" stroke="#555555" strokeWidth="2" />
        </Icon>
      </button>
      <span className="ml-[11px]">58%</span>
      <button aria-label="使幻灯片适应当前窗口" className="ml-[13px] mr-[17px] mt-[2px]">
        <Icon w={14} h={14}>
          <path
            d="M.5 1.500h13v12H.5zM7 1v4M7 14v-4M1 7.500h4M13 7.500H9M5.500 3.500L7 5l1.500-1.500M5.500 11.500L7 10l1.500 1.500"
            stroke="#666666"
            strokeDasharray="3 1"
          />
        </Icon>
      </button>
    </div>
  </footer>
);

export default function App() {
  return (
    <div className="flex h-screen min-w-0 flex-col overflow-hidden bg-[#f2f1f0] font-['Noto_Sans','Noto_Sans_CJK_SC',sans-serif] text-xs text-[#444444]">
      <TitleBar />
      <TabBar />
      <Ribbon />
      <QuickAccess />
      <Workspace />
      <StatusBar />
    </div>
  );
}
